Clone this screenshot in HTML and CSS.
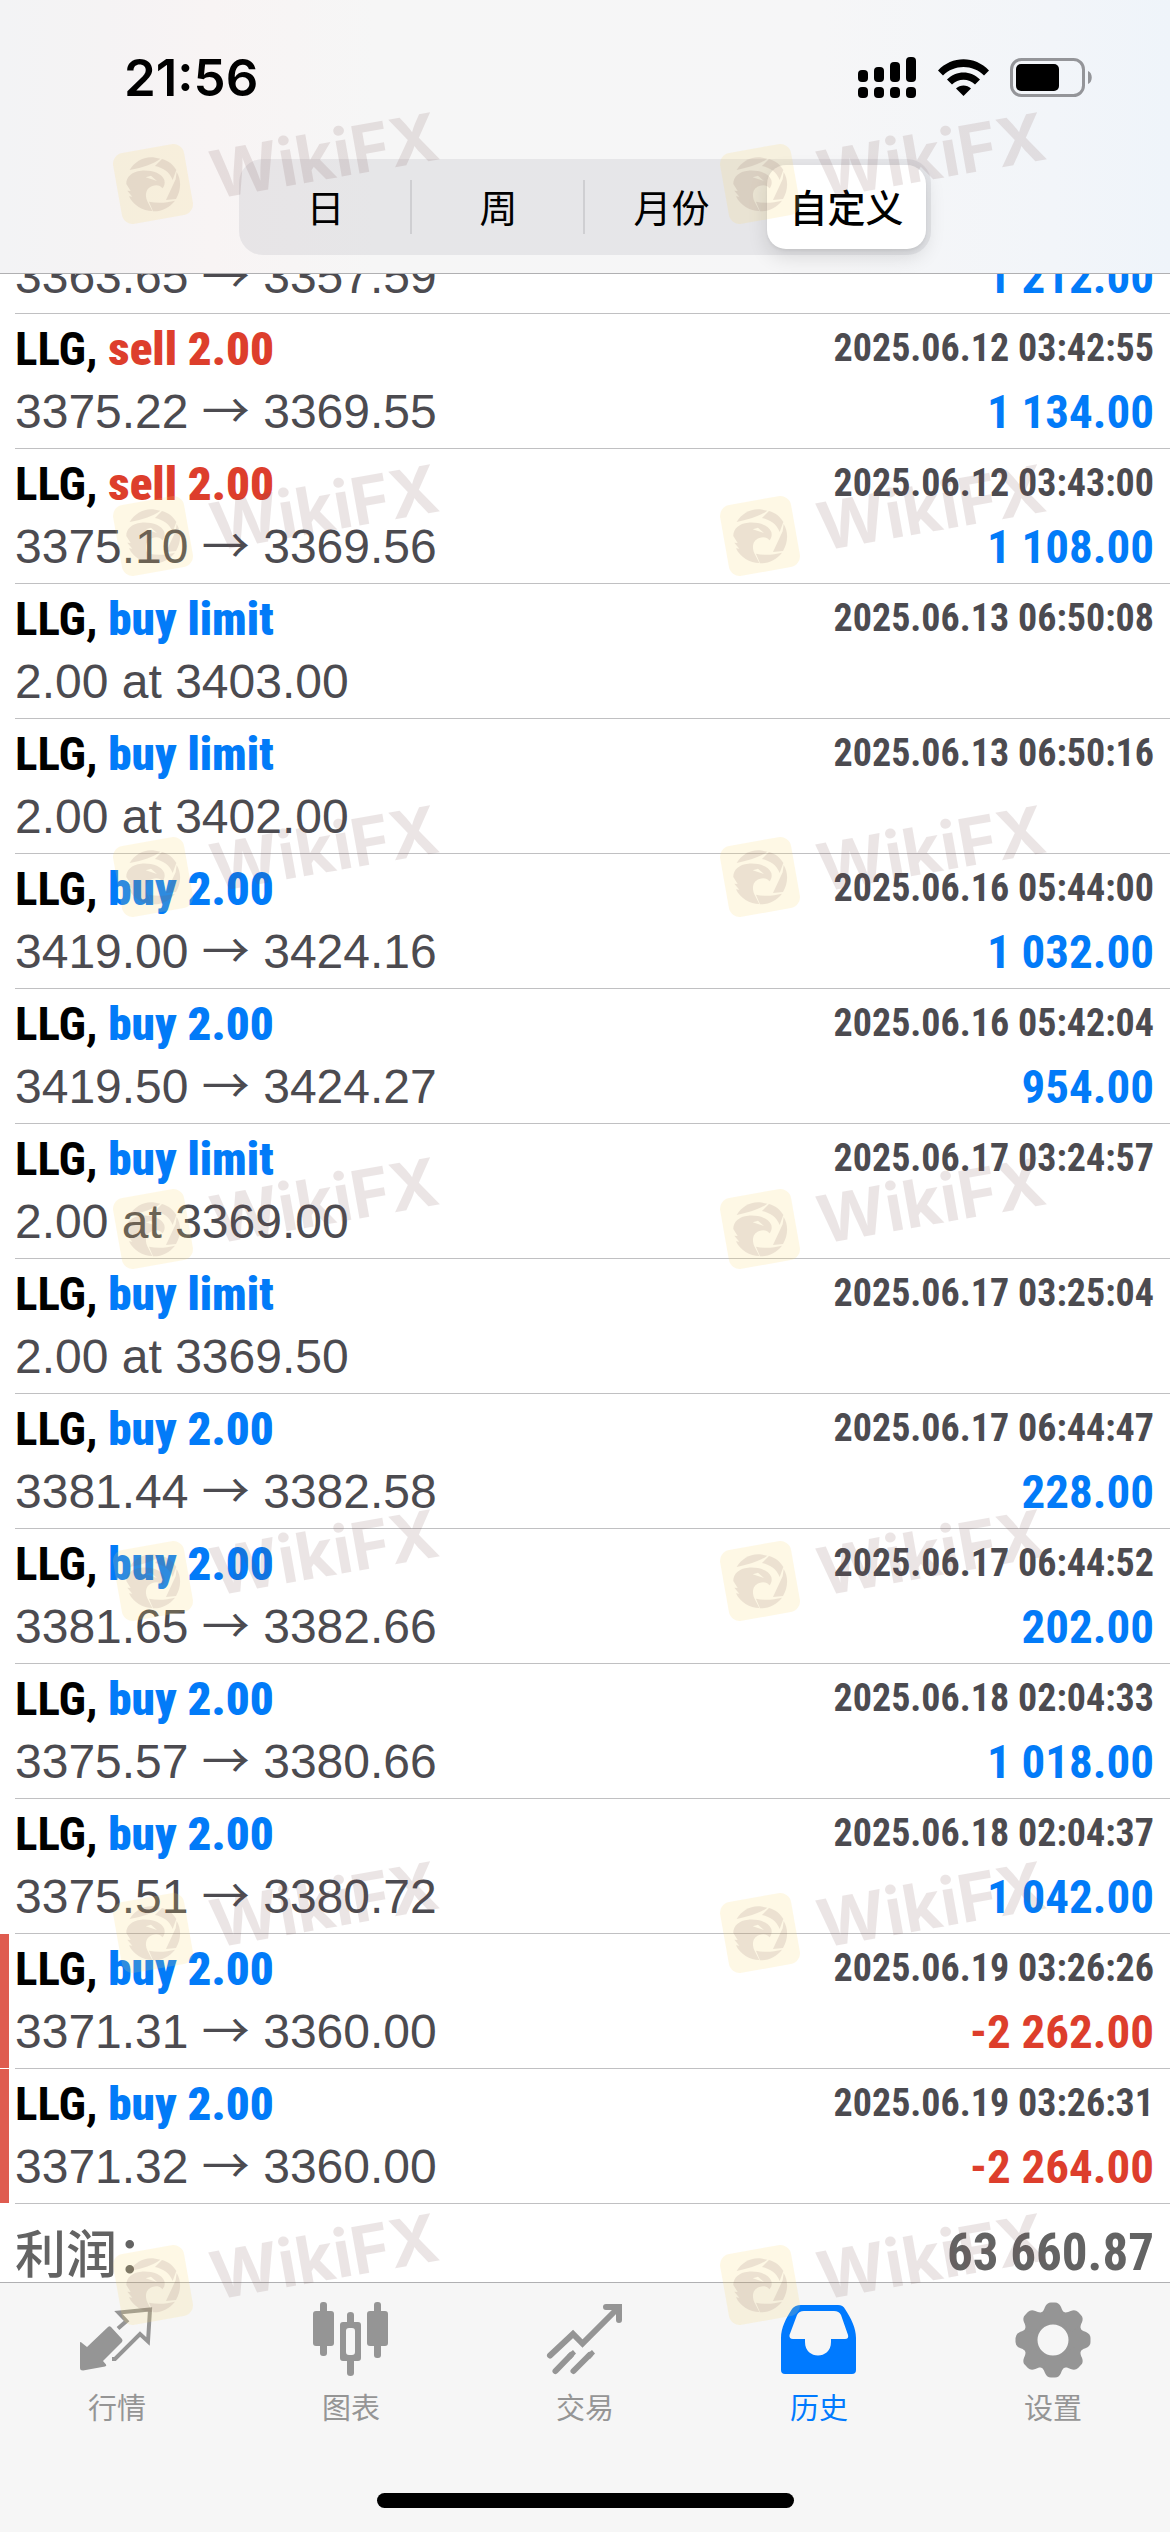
FILE: index.html
```
<!DOCTYPE html>
<html lang="zh-CN">
<head>
<meta charset="utf-8">
<meta name="viewport" content="width=device-width, initial-scale=1">
<title>历史</title>
<link rel="stylesheet" href="styles.css">
</head>
<body>
<svg class="defs" aria-hidden="true">
  <symbol id="mark" viewBox="0 0 348 140">
    <rect x="12" y="48" width="72" height="72" rx="11" fill="#fad76e" fill-opacity=".18" transform="rotate(-10 48 84)"/>
    <g fill="#785050" opacity=".13" transform="translate(-12 -12) scale(.3333)">
      <path d="M110 246C124 222 150 206 180 208L202 212C180 228 150 238 110 246Z"/>
      <path d="M186 234L207 213C226 218 240 230 250 246L239 276C230 252 212 240 186 234Z"/>
      <path d="M251 252C266 277 264 307 249 333L219 336L248 274Z"/>
      <path d="M168 341C195 347 222 344 246 338C230 358 206 371 180 370Z"/>
      <path d="M100 288C99 268 116 250 145 248C176 246 206 255 214 276C217 288 213 296 208 301C203 292 190 290 178 294C160 300 154 318 163 340L178 369C150 369 120 352 108 325L118 326L103 308L113 309ZM158 268L192 279L174 263Z" fill-rule="evenodd"/>
    </g>
  </symbol>
</svg>

<header class="top">
  <div class="status">
    <time class="clock">21:56</time>
    <div class="status-icons">
      <svg width="59" height="42" viewBox="0 0 59 42" role="img" aria-label="信号">
        <rect x="0" y="13" width="10" height="12" rx="4"/><rect x="16" y="10" width="10" height="15" rx="4"/><rect x="32" y="5" width="10" height="20" rx="4"/><rect x="48" y="0" width="10" height="25" rx="4"/>
        <rect x="0" y="30" width="10" height="11" rx="4"/><rect x="16" y="30" width="10" height="11" rx="4"/><rect x="32" y="30" width="10" height="11" rx="4"/><rect x="48" y="30" width="10" height="11" rx="4"/>
      </svg>
      <svg width="51" height="38" viewBox="0 0 51 38" role="img" aria-label="Wi-Fi">
        <path d="M0 11.500C14-3.500 37-3.500 51 11.500L46 16.500C35 5 16 5 5 16.500Z"/>
        <path d="M9 20.500C18 11 33 11 42 20.500L37 25.500C31 19 20 19 14 25.500Z"/>
        <path d="M18 29.500C22 25.500 29 25.500 33 29.500L25.500 37Z"/>
      </svg>
      <svg width="83" height="40" viewBox="0 0 83 40" role="img" aria-label="电池">
        <rect x="1.500" y="1.500" width="72" height="36" rx="10" fill="none" stroke="#949599" stroke-width="3"/>
        <rect x="6" y="6" width="43" height="27" rx="5"/>
        <path d="M78 13C83 15 83 24 78 26Z" fill="#949599"/>
      </svg>
    </div>
  </div>
  <div class="segments" role="group" aria-label="时间范围">
    <div class="cell cell-ruled"><button type="button">日</button></div>
    <div class="cell cell-ruled"><button type="button">周</button></div>
    <div class="cell"><button type="button">月份</button></div>
    <div class="cell"><button type="button" class="active" aria-pressed="true">自定义</button></div>
  </div>
</header>

<main>
  <ul class="deals">
    <li class="deal deal-cut"><div class="deal-body"><span class="prices">3363.65 <i>→</i> 3357.59</span><span class="amount">1 212.00</span></div></li>
    <li class="deal"><div class="deal-body"><span class="name">LLG, <b class="sell">sell 2.00</b></span><time class="date">2025.06.12 03:42:55</time><span class="prices">3375.22 <i>→</i> 3369.55</span><span class="amount">1 134.00</span></div></li>
    <li class="deal"><div class="deal-body"><span class="name">LLG, <b class="sell">sell 2.00</b></span><time class="date">2025.06.12 03:43:00</time><span class="prices">3375.10 <i>→</i> 3369.56</span><span class="amount">1 108.00</span></div></li>
    <li class="deal"><div class="deal-body"><span class="name">LLG, <b>buy limit</b></span><time class="date">2025.06.13 06:50:08</time><span class="prices">2.00 at 3403.00</span></div></li>
    <li class="deal"><div class="deal-body"><span class="name">LLG, <b>buy limit</b></span><time class="date">2025.06.13 06:50:16</time><span class="prices">2.00 at 3402.00</span></div></li>
    <li class="deal"><div class="deal-body"><span class="name">LLG, <b>buy 2.00</b></span><time class="date">2025.06.16 05:44:00</time><span class="prices">3419.00 <i>→</i> 3424.16</span><span class="amount">1 032.00</span></div></li>
    <li class="deal"><div class="deal-body"><span class="name">LLG, <b>buy 2.00</b></span><time class="date">2025.06.16 05:42:04</time><span class="prices">3419.50 <i>→</i> 3424.27</span><span class="amount">954.00</span></div></li>
    <li class="deal"><div class="deal-body"><span class="name">LLG, <b>buy limit</b></span><time class="date">2025.06.17 03:24:57</time><span class="prices">2.00 at 3369.00</span></div></li>
    <li class="deal"><div class="deal-body"><span class="name">LLG, <b>buy limit</b></span><time class="date">2025.06.17 03:25:04</time><span class="prices">2.00 at 3369.50</span></div></li>
    <li class="deal"><div class="deal-body"><span class="name">LLG, <b>buy 2.00</b></span><time class="date">2025.06.17 06:44:47</time><span class="prices">3381.44 <i>→</i> 3382.58</span><span class="amount">228.00</span></div></li>
    <li class="deal"><div class="deal-body"><span class="name">LLG, <b>buy 2.00</b></span><time class="date">2025.06.17 06:44:52</time><span class="prices">3381.65 <i>→</i> 3382.66</span><span class="amount">202.00</span></div></li>
    <li class="deal"><div class="deal-body"><span class="name">LLG, <b>buy 2.00</b></span><time class="date">2025.06.18 02:04:33</time><span class="prices">3375.57 <i>→</i> 3380.66</span><span class="amount">1 018.00</span></div></li>
    <li class="deal"><div class="deal-body"><span class="name">LLG, <b>buy 2.00</b></span><time class="date">2025.06.18 02:04:37</time><span class="prices">3375.51 <i>→</i> 3380.72</span><span class="amount">1 042.00</span></div></li>
    <li class="deal deal-loss"><div class="deal-body"><span class="name">LLG, <b>buy 2.00</b></span><time class="date">2025.06.19 03:26:26</time><span class="prices">3371.31 <i>→</i> 3360.00</span><span class="amount">-2 262.00</span></div></li>
    <li class="deal deal-loss"><div class="deal-body"><span class="name">LLG, <b>buy 2.00</b></span><time class="date">2025.06.19 03:26:31</time><span class="prices">3371.32 <i>→</i> 3360.00</span><span class="amount">-2 264.00</span></div></li>
  </ul>
  <div class="total"><span class="total-label">利润：</span><span class="total-value">63 660.87</span></div>
</main>

<footer class="bottom">
  <nav class="tabs">
    <a class="tab" href="#quotes">
      <svg viewBox="0 0 80 78"><path d="M3 42Q3 40 5 42L10 46L31 26Q32.500 24.500 34 26L45 38Q46 39.500 45 41L26 60L29 63.500Q30 65 28 65.500L6 69.500Q3 69.500 3 67Z"/><path d="M41 27.500L49.500 20L41.500 11.500L73 8.500L71 40.500L63 33L38 58H35" fill="none" stroke="currentColor" stroke-width="4"/></svg>
      <span>行情</span></a>
    <a class="tab" href="#charts">
      <svg viewBox="0 0 80 78"><rect x="9" y="1" width="7" height="54" rx="3"/><rect x="2" y="10" width="21" height="35" rx="3"/><rect x="63" y="1" width="7" height="56" rx="3"/><rect x="56" y="10" width="21" height="35" rx="3"/><path d="M36 21V14Q36 11 39.500 11T43 14V21H47Q50 21 50 24V57Q50 60 47 60H43V72Q43 75 39.500 75T36 72V60H32Q29 60 29 57V24Q29 21 32 21ZM38 27Q35 27 35 30V51Q35 54 38 54H41Q44 54 44 51V30Q44 27 41 27Z" fill-rule="evenodd"/></svg>
      <span>图表</span></a>
    <a class="tab" href="#trade">
      <svg viewBox="0 0 80 78"><g fill="none" stroke="currentColor" stroke-width="6" stroke-linecap="round"><path d="M5 54.500L28 33L37.500 42.500L73 7M61 6H74V19"/><path d="M10.500 70L26 54M28.500 70L44.500 54"/></g><path d="M28 49L31 52.500L26 58L22 54ZM47 49L50 52.500L45 58L41 54Z"/></svg>
      <span>交易</span></a>
    <a class="tab tab-on" href="#history" aria-current="page">
      <svg viewBox="0 0 80 78"><path d="M22 4H59Q64 4 66 8C72 17 77 27 77 37V69Q77 73 73 73H6Q2 73 2 69V37C2 27 7 17 13 8Q16 4 22 4ZM25 10Q20 10 18 14L10.500 34Q10 38 14 38H26V41C26 59 52 59 52 41V38H66Q70 38 69 34L62 14Q60 10 55 10Z" fill-rule="evenodd"/></svg>
      <span>历史</span></a>
    <a class="tab" href="#settings">
      <svg viewBox="0 0 80 78"><circle cx="40" cy="39" r="22.500" fill="none" stroke="currentColor" stroke-width="14"/>
        <g id="tooth"><path d="M26 13C30 11 31 9 32 6Q34 1.500 38 1.500H42Q46 1.500 48 6C49 9 50 11 54 13L48 20H32Z"/></g>
        <use href="#tooth" transform="rotate(45 40 39)"/><use href="#tooth" transform="rotate(90 40 39)"/><use href="#tooth" transform="rotate(135 40 39)"/><use href="#tooth" transform="rotate(180 40 39)"/><use href="#tooth" transform="rotate(225 40 39)"/><use href="#tooth" transform="rotate(270 40 39)"/><use href="#tooth" transform="rotate(315 40 39)"/></svg>
      <span>设置</span></a>
  </nav>
  <div class="home-bar"></div>
</footer>

<div class="marks" aria-hidden="true">
  <div class="mark-row">
    <svg viewBox="0 0 348 140"><use href="#mark"/><text x="110" y="99" transform="rotate(-10 110 99)">WikiFX</text></svg>
    <svg viewBox="0 0 348 140"><use href="#mark"/><text x="110" y="99" transform="rotate(-10 110 99)">WikiFX</text></svg>
  </div>
  <div class="mark-row mark-row-short">
    <svg viewBox="0 0 348 140"><use href="#mark"/><text x="110" y="99" transform="rotate(-10 110 99)">WikiFX</text></svg>
    <svg viewBox="0 0 348 140"><use href="#mark"/><text x="110" y="99" transform="rotate(-10 110 99)">WikiFX</text></svg>
  </div>
  <div class="mark-row">
    <svg viewBox="0 0 348 140"><use href="#mark"/><text x="110" y="99" transform="rotate(-10 110 99)">WikiFX</text></svg>
    <svg viewBox="0 0 348 140"><use href="#mark"/><text x="110" y="99" transform="rotate(-10 110 99)">WikiFX</text></svg>
  </div>
  <div class="mark-row">
    <svg viewBox="0 0 348 140"><use href="#mark"/><text x="110" y="99" transform="rotate(-10 110 99)">WikiFX</text></svg>
    <svg viewBox="0 0 348 140"><use href="#mark"/><text x="110" y="99" transform="rotate(-10 110 99)">WikiFX</text></svg>
  </div>
  <div class="mark-row">
    <svg viewBox="0 0 348 140"><use href="#mark"/><text x="110" y="99" transform="rotate(-10 110 99)">WikiFX</text></svg>
    <svg viewBox="0 0 348 140"><use href="#mark"/><text x="110" y="99" transform="rotate(-10 110 99)">WikiFX</text></svg>
  </div>
  <div class="mark-row">
    <svg viewBox="0 0 348 140"><use href="#mark"/><text x="110" y="99" transform="rotate(-10 110 99)">WikiFX</text></svg>
    <svg viewBox="0 0 348 140"><use href="#mark"/><text x="110" y="99" transform="rotate(-10 110 99)">WikiFX</text></svg>
  </div>
  <div class="mark-row">
    <svg viewBox="0 0 348 140"><use href="#mark"/><text x="110" y="99" transform="rotate(-10 110 99)">WikiFX</text></svg>
    <svg viewBox="0 0 348 140"><use href="#mark"/><text x="110" y="99" transform="rotate(-10 110 99)">WikiFX</text></svg>
  </div>
</div>
</body>
</html>
```
FILE: styles.css
```
* { box-sizing: border-box; }

body {
  position: relative;
  display: flex;
  flex-direction: column;
  min-height: 100vh;
  margin: 0;
  background: #fff;
  color: #4c4b50;
  font-family: "Liberation Sans", "Noto Sans CJK SC", sans-serif;
}

.defs { position: absolute; width: 0; height: 0; }

/* Header */
.top {
  padding-bottom: 18px;
  border-bottom: 1px solid #b0b0b2;
  background: linear-gradient(90deg, #f3f3f5 0%, #f5f3f4 9%, #f8f4f4 18%, #f6f6f6 32%, #f6f6f7 70%, #f2f5f9 90%, #eff4fa 100%);
}

.status {
  display: flex;
  align-items: center;
  justify-content: space-between;
  height: 159px;
  padding: 0 77px 4px 124px;
}

.clock {
  color: #000;
  font: 600 51px/60px Inter, sans-serif;
}

.status-icons {
  display: flex;
  align-items: center;
  gap: 21px;
}

.segments {
  display: grid;
  grid-template-columns: repeat(4, 1fr);
  width: 692px;
  max-width: 100%;
  height: 96px;
  margin: 0 auto;
  border-radius: 24px;
  background: rgba(118, 118, 128, .12);
}

.cell { display: grid; padding: 6px 5px; }

.cell:last-child { padding-left: 9px; }

.cell-ruled { background: linear-gradient(#cfcfd2, #cfcfd2) 100% 50% / 2px 54px no-repeat; }

.cell button {
  padding: 0 0 2px;
  border: 0;
  border-radius: 19px;
  background: none;
  color: #000;
  font: 400 38px/54px "Noto Sans CJK SC", sans-serif;
}

.cell .active {
  background: #fff;
  box-shadow: 0 8px 20px rgba(0, 0, 0, .12), 0 2px 3px rgba(0, 0, 0, .05);
  font-weight: 500;
}

/* History list */
.deals { margin: 0; padding: 0; list-style: none; }

.deal { padding-left: 15px; }

.deal-body {
  display: grid;
  grid-template-columns: 1fr auto;
  height: 135px;
  padding: 3px 16px 5px 0;
  border-bottom: 1px solid #c0c0c2;
  font-size: 48px;
  line-height: 63px;
  white-space: nowrap;
}

.deal-cut {
  display: flex;
  flex-direction: column;
  justify-content: flex-end;
  height: 40px;
  overflow: hidden;
}

.deal-cut .deal-body { flex: none; height: auto; padding-top: 0; }

.deal-loss { background: linear-gradient(#df5c50, #df5c50) 0 0 / 9px calc(100% - 1px) no-repeat; }

.name, .date, .amount, .total-value {
  font-family: "Roboto Condensed", "Liberation Sans", sans-serif;
  font-weight: 700;
}

.name { color: #000; font-size: 47px; }
.name b { color: #027bf8; }
.name .sell { color: #dd3e2c; }

.date { font-size: 38px; text-align: right; }

.prices i { font-family: "Noto Sans CJK SC", sans-serif; font-style: normal; line-height: 1px; }

.amount { color: #027bf8; font-size: 47px; text-align: right; }
.deal-loss .amount { color: #dd3e2c; }

.total {
  display: flex;
  align-items: flex-start;
  justify-content: space-between;
  height: 78px;
  padding: 20px 16px 0 15px;
  color: #636363;
}

.total-label { font: 500 51px/54px "Noto Sans CJK SC", sans-serif; }

.total-value { font-size: 51px; line-height: 58px; }

/* Tab bar */
.bottom {
  display: flex;
  flex: 1;
  flex-direction: column;
  padding-bottom: 24px;
  border-top: 1px solid #b0b0b2;
  background: #f6f6f6;
}

.tabs {
  display: grid;
  grid-template-columns: repeat(5, 1fr);
  padding-top: 18px;
}

.tab {
  display: flex;
  flex-direction: column;
  align-items: center;
  gap: 10px;
  color: #959595;
  font: 400 29px/34px "Noto Sans CJK SC", sans-serif;
  text-decoration: none;
}

.tab svg { width: 80px; height: 78px; fill: currentColor; }

.tab-on { color: #007aff; }

.home-bar {
  width: 417px;
  height: 15px;
  margin: auto auto 0;
  border-radius: 8px;
  background: #000;
}

/* Repeating brand overlay */
.marks {
  position: absolute;
  inset: 0;
  padding-top: 100px;
  overflow: hidden;
  pointer-events: none;
}

.mark-row {
  display: flex;
  gap: 259px;
  height: 352px;
  padding-left: 105px;
}

.mark-row-short { height: 341px; }

.mark-row svg { flex: none; width: 348px; height: 140px; overflow: visible; }

.mark-row text {
  fill: #785050;
  opacity: .14;
  font: 700 66px Inter, sans-serif;
}
```
